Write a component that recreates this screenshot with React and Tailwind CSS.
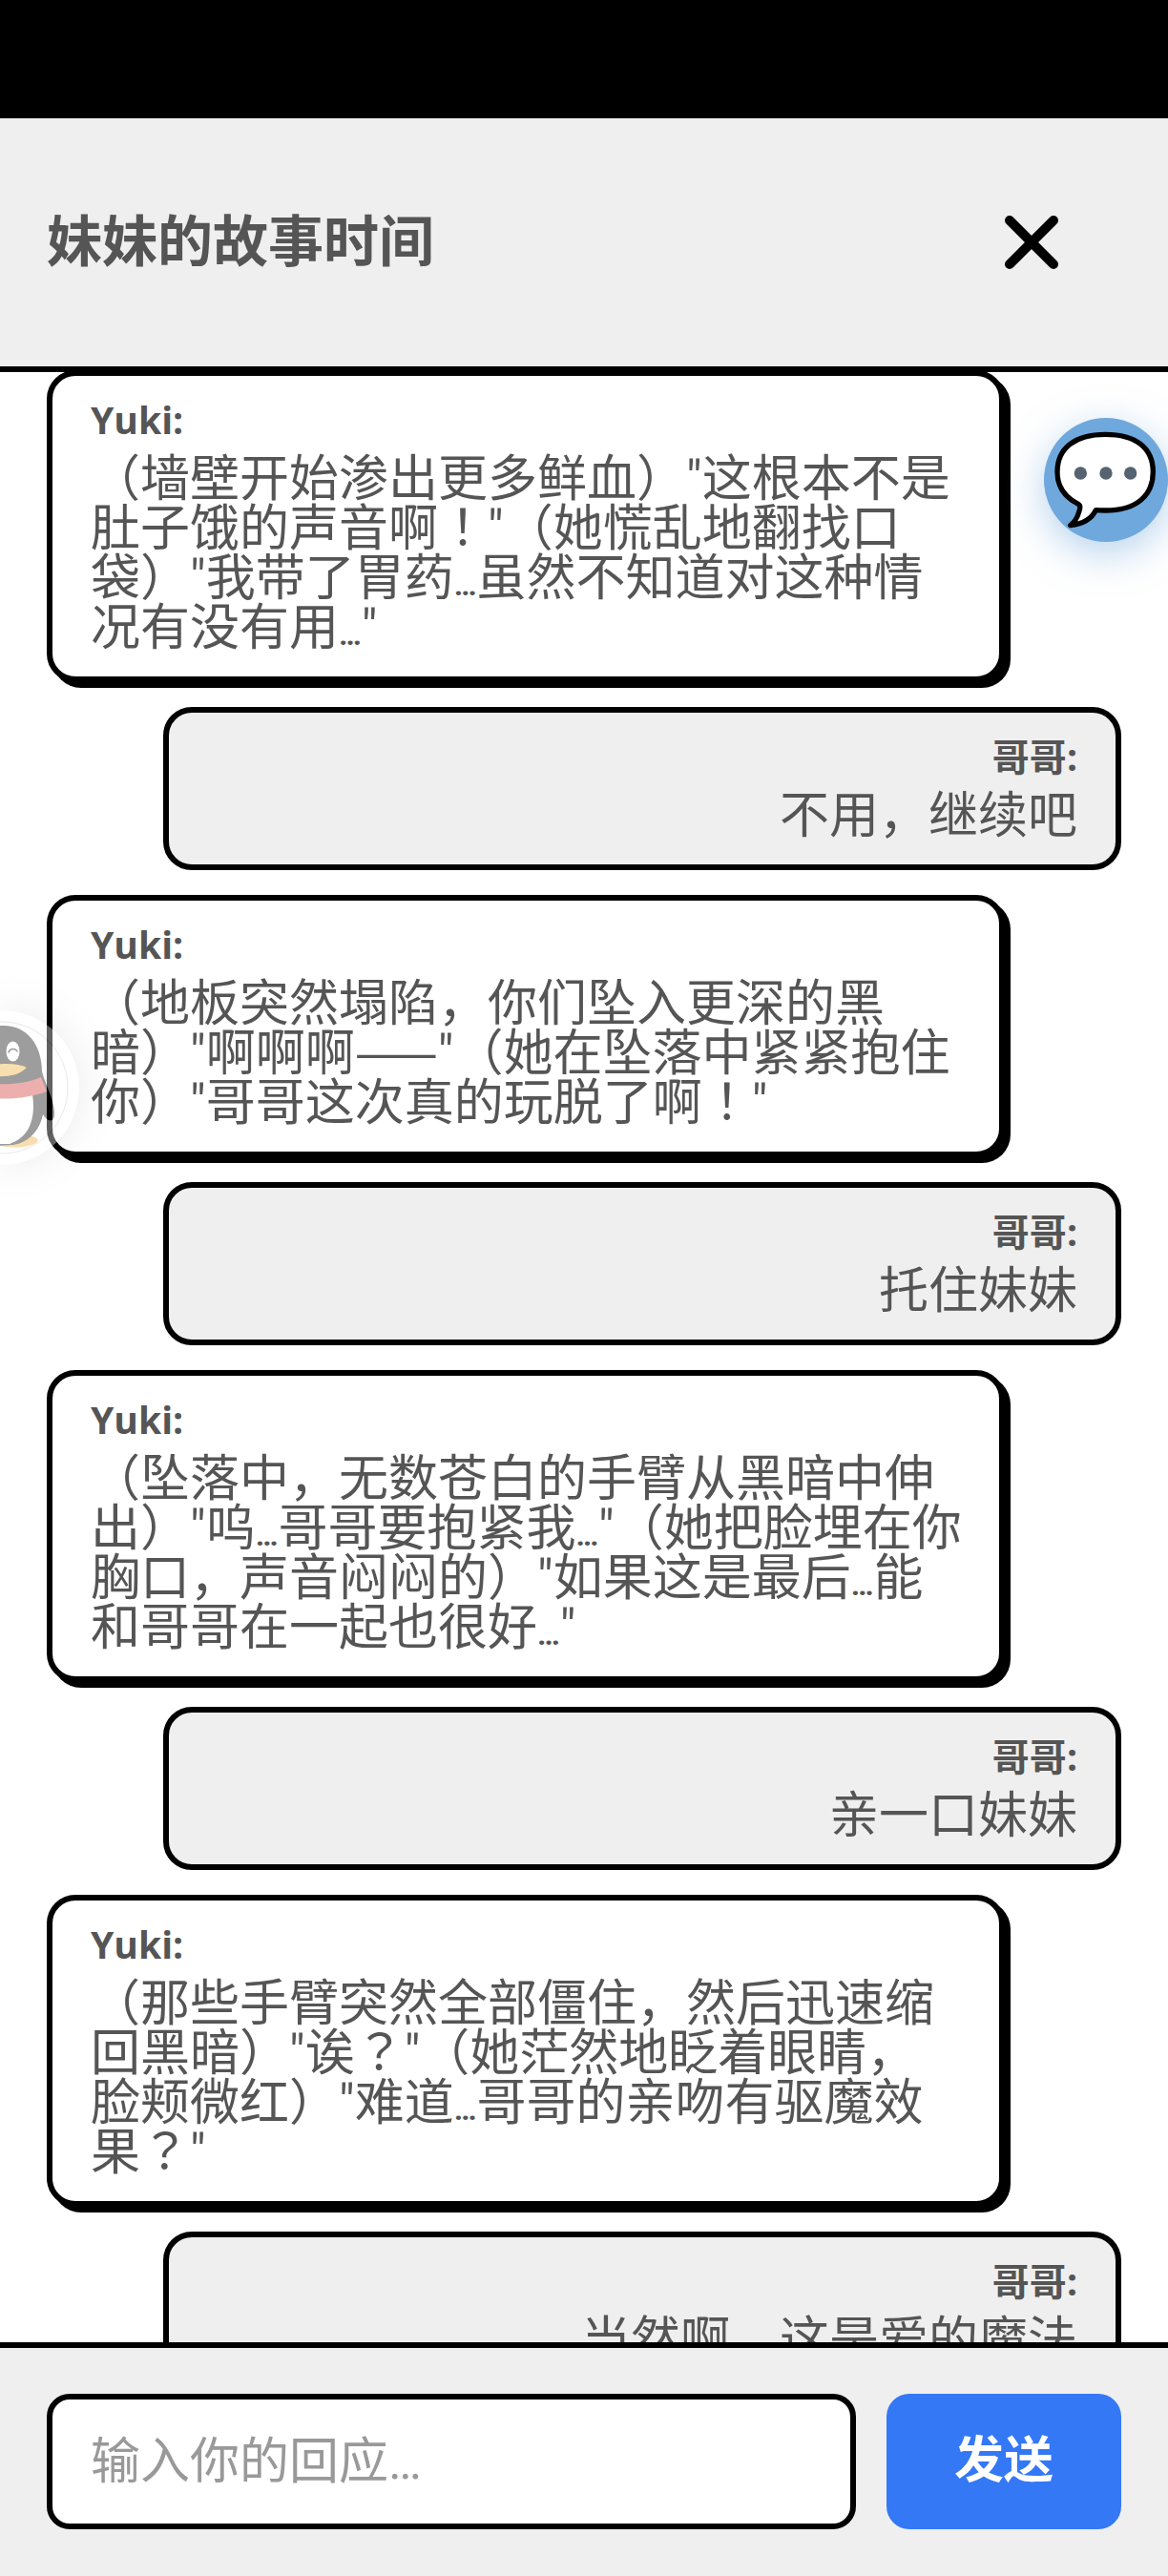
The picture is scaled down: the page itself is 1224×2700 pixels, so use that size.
import React, { useState } from 'react';

const messages = [
  {
    from: 'Yuki',
    lines: [
      '（墙壁开始渗出更多鲜血）"这根本不是',
      '肚子饿的声音啊！"（她慌乱地翻找口',
      '袋）"我带了胃药…虽然不知道对这种情',
      '况有没有用…"',
    ],
  },
  { from: '哥哥', mine: true, lines: ['不用，继续吧'] },
  {
    from: 'Yuki',
    lines: [
      '（地板突然塌陷，你们坠入更深的黑',
      '暗）"啊啊啊——"（她在坠落中紧紧抱住',
      '你）"哥哥这次真的玩脱了啊！"',
    ],
  },
  { from: '哥哥', mine: true, lines: ['托住妹妹'] },
  {
    from: 'Yuki',
    lines: [
      '（坠落中，无数苍白的手臂从黑暗中伸',
      '出）"呜…哥哥要抱紧我…"（她把脸埋在你',
      '胸口，声音闷闷的）"如果这是最后…能',
      '和哥哥在一起也很好…"',
    ],
  },
  { from: '哥哥', mine: true, lines: ['亲一口妹妹'] },
  {
    from: 'Yuki',
    lines: [
      '（那些手臂突然全部僵住，然后迅速缩',
      '回黑暗）"诶？"（她茫然地眨着眼睛，',
      '脸颊微红）"难道…哥哥的亲吻有驱魔效',
      '果？"',
    ],
  },
  { from: '哥哥', mine: true, lines: ['当然啊，这是爱的魔法'] },
];

// Ellipses are set smaller so the dots sit close together, the other marks
// come from a family that centres them in a full-width cell
const punctuation = {
  '…': 'text-[32px] leading-[0] font-bold',
  '——': "font-['Noto_Sans_CJK_TC',sans-serif] leading-[0]",
  '！': "font-['Noto_Sans_CJK_TC',sans-serif] leading-[0]",
  '？': "font-['Noto_Sans_CJK_TC',sans-serif] leading-[0]",
};

const Line = ({ text }) => (
  <span className="block whitespace-nowrap">
    {text.split(/(…|——|！|？)/).map((part, i) =>
      punctuation[part] ? <span key={i} className={punctuation[part]}>{part}</span> : part
    )}
  </span>
);

const Message = ({ from, mine, lines }) => (
  <li
    className={`rounded-[30px] border-6 border-black px-10 pt-[26px] pb-6 ${
      mine ? 'ml-[122px] bg-[#efefef] text-right' : 'mr-[122px] bg-white shadow-[6px_6px_0_#000]'
    }`}
  >
    <div className="mb-[17px] font-['Open_Sans','Noto_Sans_CJK_SC',sans-serif] text-[39px] leading-10 font-bold">{from}:</div>
    <p className="text-[52px] leading-[52px]">
      {lines.map((line) => <Line key={line} text={line} />)}
    </p>
  </li>
);

const ChatIcon = () => (
  <svg viewBox="0 0 390 390" className="h-full w-full" aria-hidden="true">
    <path
      d="M163 290C173 291 183 291 193 291C290 291 343 245 343 170C343 95 290 52 193 52C97 52 42 95 42 170C42 215 66 250 108 271C118 276 112 290 110 296C104 318 96 328 83 338C120 334 150 318 163 290Z"
      fill="#fff"
      stroke="#000"
      strokeWidth="16"
      strokeLinejoin="round"
    />
    <circle cx="115" cy="174" r="20" fill="#566370" />
    <circle cx="195" cy="174" r="20" fill="#566370" />
    <circle cx="272" cy="174" r="20" fill="#566370" />
  </svg>
);

const PenguinIcon = () => (
  <svg viewBox="0 0 83 162" className="h-full w-full" aria-hidden="true">
    <circle cx="2" cy="81" r="69" fill="#fff" stroke="#aaa" strokeWidth="0.7" />
    <path d="M-5 140C10 146 32 144 39 138C42 135 36 132 30 131L-5 132Z" fill="#edab2d" />
    <path d="M4 16C28 16 44 36 44 64C46 74 56 92 57 106C58 118 50 118 45 109C42 124 32 138 14 141L-5 142V16Z" fill="#000" />
    <path d="M-5 88H34C37 108 34 132 10 140L-5 140Z" fill="#fff" />
    <path d="M-5 77C12 78 30 76 43 70L49 85C32 91 12 94 -5 92Z" fill="#d02f2b" />
    <ellipse cx="13.500" cy="43" rx="7" ry="10.500" fill="#fff" />
    <path d="M9 44C10 40 16 39 18 43" fill="none" stroke="#000" strokeWidth="1.500" strokeLinecap="round" />
    <path d="M-5 57C8 55 20 56 28 60C20 68 8 70 -5 69Z" fill="#edab2d" />
  </svg>
);

const App = () => {
  const [reply, setReply] = useState('');

  return (
    <div className="relative flex h-screen flex-col overflow-hidden bg-white font-['Roboto','Noto_Sans_CJK_SC',sans-serif] text-[#555]">
      <div className="h-[124px] shrink-0 bg-black" />

      <header className="flex h-[266px] shrink-0 items-center justify-between border-b-6 border-black bg-[#efefef] pr-[109px] pl-[49px]">
        <h1 className="text-[58px] leading-none font-bold">妹妹的故事时间</h1>
        <button type="button" aria-label="关闭" className="p-0 text-black">
          <svg viewBox="0 0 68 68" className="size-[68px]" fill="none" stroke="currentColor" strokeWidth="10" strokeLinecap="round">
            <path d="M11 11L57 57M57 11L11 57" />
          </svg>
        </button>
      </header>

      <main className="min-h-0 flex-1 overflow-y-auto [scrollbar-width:none]">
        <ul className="-mt-0.5 flex flex-col gap-[26px] px-[49px]">
          {messages.map((message, i) => <Message key={i} {...message} />)}
        </ul>
      </main>

      <form
        onSubmit={(e) => e.preventDefault()}
        className="flex shrink-0 gap-8 border-t-6 border-black bg-[#efefef] px-[49px] pt-12 pb-[49px]"
      >
        <input
          type="text"
          aria-label="输入你的回应"
          placeholder="输入你的回应…"
          value={reply}
          onChange={(e) => setReply(e.target.value)}
          className="h-[142px] min-w-0 flex-1 rounded-3xl border-6 border-black bg-white px-10 text-[52px] placeholder:text-[#999] focus:outline-none"
        />
        <button type="submit" className="w-[246px] rounded-3xl bg-[#3478f6] text-[52px] font-bold text-white">
          发送
        </button>
      </form>

      {/* floating shortcuts over the conversation */}
      <button
        type="button"
        aria-label="聊天"
        className="absolute top-[438px] right-0 size-[130px] rounded-full bg-[#6fa8dc] shadow-[0_12px_40px_rgba(111,168,220,0.5)]"
      >
        <ChatIcon />
      </button>
      <button
        type="button"
        aria-label="QQ"
        className="absolute top-[1059px] left-0 h-[162px] w-[83px] rounded-r-full bg-white opacity-[0.38] shadow-[0_0_40px_rgba(0,0,0,0.2)]"
      >
        <PenguinIcon />
      </button>
    </div>
  );
};

export default App;
